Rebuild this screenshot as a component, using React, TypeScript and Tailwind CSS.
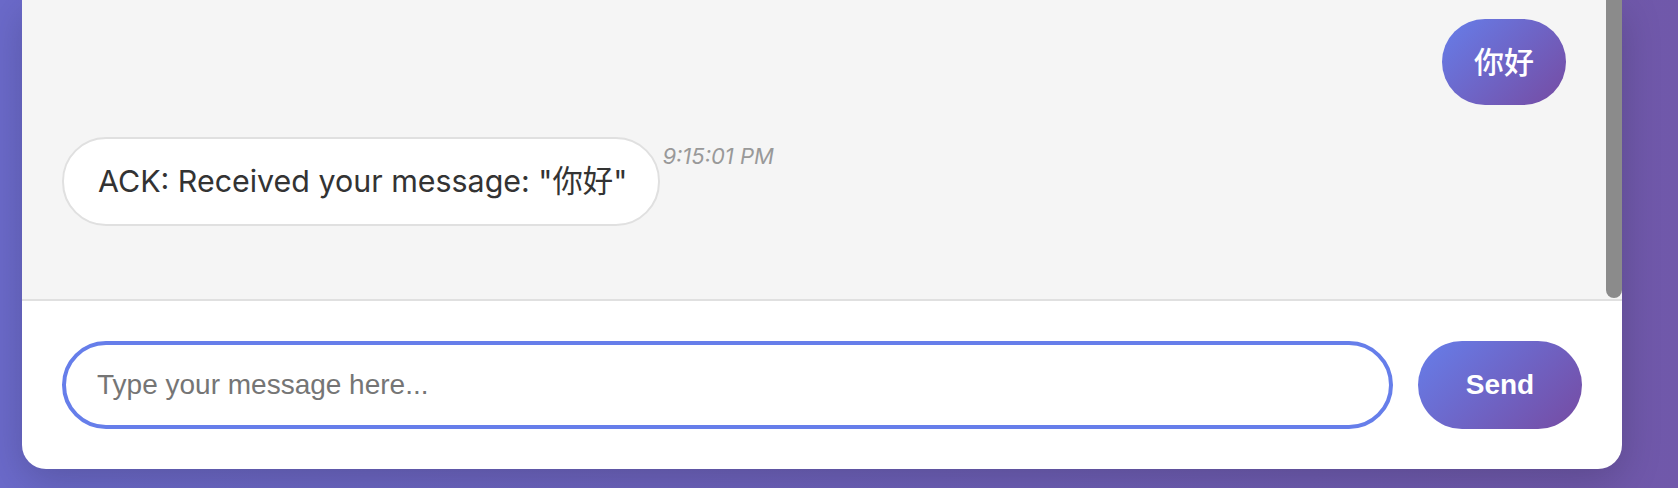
import React from "react";

const messages = [
  { id: 1, from: "me", text: "你好" },
  { id: 2, from: "server", text: 'ACK: Received your message: "你好"', time: "9:15:01 PM" },
];

function SentBubble({ text }: { text: string }) {
  return (
    <div className="flex justify-end">
      <div className="flex h-[86px] items-center rounded-full bg-[linear-gradient(135deg,#667eea_0%,#764ba2_100%)] px-[32px] text-[30px] font-medium text-white">
        {text}
      </div>
    </div>
  );
}

function ReceivedBubble({ text, time }: { text: string; time?: string }) {
  return (
    <div className="flex items-start">
      <div className="flex h-[89px] items-center rounded-[44px] border-2 border-[#e0e0e0] bg-white pl-[34px] pr-[31px] text-[30.4px] text-[#333]">
        {text}
      </div>
      {time && (
        <span className="ml-[2px] mt-[6px] text-[22px] leading-[26px] italic text-[#999]">{time}</span>
      )}
    </div>
  );
}

export default function App() {
  return (
    <div
      className="flex h-[488px] w-full overflow-hidden bg-[linear-gradient(90deg,#6b6aca_0%,#7058aa_100%)] pb-[19px] pl-[22px]"
      style={{ fontFamily: 'Inter, "Noto Sans CJK SC", sans-serif' }}
    >
      <div className="flex w-[1600px] flex-col overflow-hidden rounded-b-[24px] bg-white shadow-[0_12px_40px_rgba(0,0,0,0.18)]">
        {/* message list */}
        <div className="flex min-h-0 flex-1 bg-[#f5f5f5]">
          <div className="flex min-w-0 flex-1 flex-col justify-end gap-[32px] overflow-hidden pb-[73px] pl-[40px] pr-[40px]">
            {messages.map((m) =>
              m.from === "me" ? (
                <SentBubble key={m.id} text={m.text} />
              ) : (
                <ReceivedBubble key={m.id} text={m.text} time={m.time} />
              )
            )}
          </div>
          <div className="mb-[1px] w-[16px] rounded-b-[8px] bg-[#8b8b8b]" />
        </div>

        {/* composer */}
        <div className="flex gap-[25px] border-t-2 border-[#e0e0e0] px-[40px] py-[40px]">
          <input
            type="text"
            placeholder="Type your message here..."
            className="h-[88px] min-w-0 flex-1 rounded-full border-4 border-[#667eea] bg-white pl-[31px] text-[28px] text-[#333] outline-none placeholder:text-[#757575]"
            style={{ fontFamily: '"Liberation Sans", Arial, sans-serif' }}
          />
          <button
            className="h-[88px] w-[164px] rounded-full bg-[linear-gradient(135deg,#667eea_0%,#764ba2_100%)] text-[28px] font-bold text-white"
            style={{ fontFamily: '"Liberation Sans", Arial, sans-serif' }}
          >
            Send
          </button>
        </div>
      </div>
    </div>
  );
}
